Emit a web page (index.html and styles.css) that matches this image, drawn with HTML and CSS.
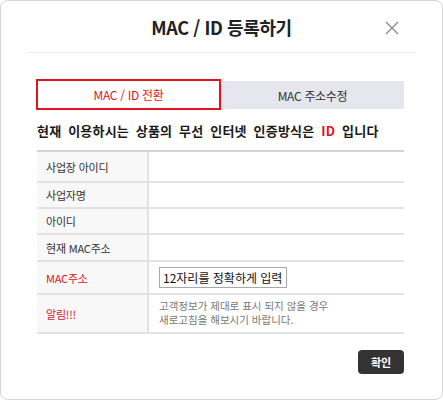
FILE: index.html
```html
<!DOCTYPE html>
<html lang="ko">
<head>
<meta charset="utf-8">
<link rel="stylesheet" href="styles.css">
</head>
<body>
<div class="dialog">
  <div class="header">
    <h1 class="title">MAC / ID 등록하기</h1>
    <button class="close" aria-label="닫기">
      <svg width="14" height="14" viewBox="0 0 14 14"><path d="M1 1L13 13M13 1L1 13" stroke="#8a8a8a" stroke-width="1.3" fill="none"/></svg>
    </button>
  </div>
  <div class="content">
    <div class="tabs">
      <div class="tab tab-active">MAC / ID 전환</div>
      <div class="tab tab-other">MAC 주소수정</div>
    </div>
    <p class="notice">현재 이용하시는 상품의 무선 인터넷 인증방식은 <span class="red">ID</span> 입니다</p>
    <div class="table">
      <div class="row r1"><div class="label">사업장 아이디</div><div class="value"></div></div>
      <div class="row r2"><div class="label">사업자명</div><div class="value"></div></div>
      <div class="row r3"><div class="label">아이디</div><div class="value"></div></div>
      <div class="row r4"><div class="label">현재 MAC주소</div><div class="value"></div></div>
      <div class="row r5"><div class="label red">MAC주소</div><div class="value"><input class="mac" type="text" value="12자리를 정확하게 입력하세요"></div></div>
      <div class="row r6"><div class="label red">알림!!!</div><div class="value info"><span class="line">고객정보가 제대로 표시 되지 않을 경우</span><span class="line">새로고침을 해보시기 바랍니다.</span></div></div>
    </div>
    <div class="actions"><button class="ok">확인</button></div>
  </div>
</div>
</body>
</html>
```
FILE: styles.css
```css
* { box-sizing: border-box; }
html, body { margin: 0; padding: 0; background: #ffffff; }
body { font-family: "Noto Sans CJK KR", "Noto Sans", sans-serif; color: #333; }
.dialog {
  width: 443px; height: 400px;
  border: 1px solid #d4d4da;
  border-radius: 8px;
  background: #fff;
}
.header {
  position: relative;
  margin: 0 26px;
  height: 52px;
  border-bottom: 1px solid #ececec;
  display: flex; align-items: center; justify-content: center;
}
.title {
  margin: 0; padding-top: 1px;
  font-size: 18px; font-weight: 700; color: #222;
  letter-spacing: -0.4px;
}
.close {
  position: absolute; right: 17px; top: 20px;
  width: 14px; height: 14px; padding: 0; border: 0; background: none;
  display: block;
}
.close svg { display: block; }
.content { padding: 26px 38px 0 35px; }
.tabs { display: flex; align-items: center; height: 31px; }
.tab {
  display: flex; align-items: center; justify-content: center;
  font-size: 12px; letter-spacing: -0.3px;
}
.tab-active {
  width: 185px; height: 31px;
  border: 2px solid #e2141f; color: #e2141f;
}
.tab-other {
  flex: 1; height: 28px; margin-top: 1px;
  background: #e6e6ee; color: #333;
}
.notice {
  margin: 10px 0 0 1px; height: 22px; line-height: 22px;
  font-size: 13px; font-weight: 700; color: #1a1a1a;
  word-spacing: 3px; letter-spacing: 0.2px;
  white-space: nowrap;
}
.red { color: #e2141f; }
.table {
  margin: 8px 0 0 1px;
  border-top: 2px solid #d4d4d4;
}
.row { display: flex; border-bottom: 2px solid #e2e2e2; }
.r1 { height: 31px; }
.r2 { height: 26px; }
.r3 { height: 26px; }
.r4 { height: 27px; }
.r5 { height: 33px; }
.r6 { height: 39px; }
.label {
  width: 112px; flex: none;
  background: #f8f8f8;
  border-right: 2px solid #e2e2e2;
  display: flex; align-items: center;
  padding-left: 9px;
  font-size: 11px; color: #333; letter-spacing: -0.2px;
}
.label.red { color: #e2141f; }
.value {
  flex: 1;
  display: flex; align-items: center;
  padding-left: 10px;
}
.mac {
  width: 128px; height: 21px;
  border: 1px solid #a8a8a8;
  padding: 0 3px;
  font-family: "Noto Sans CJK KR", sans-serif;
  font-size: 12px; color: #111;
  outline: none;
}
.info {
  display: flex; flex-direction: column; align-items: flex-start; justify-content: flex-start;
  padding-top: 4px; padding-left: 10px;
  font-size: 10.5px; color: #777;
}
.line { display: block; height: 14px; line-height: 14px; }
.actions { display: flex; justify-content: flex-end; margin-top: 16px; }
.ok {
  width: 46px; height: 24px;
  border: 0; border-radius: 4px;
  background: #333; color: #fff;
  font-family: "Noto Sans CJK KR", sans-serif;
  font-size: 11px; font-weight: 700;
  padding: 0;
}
```
